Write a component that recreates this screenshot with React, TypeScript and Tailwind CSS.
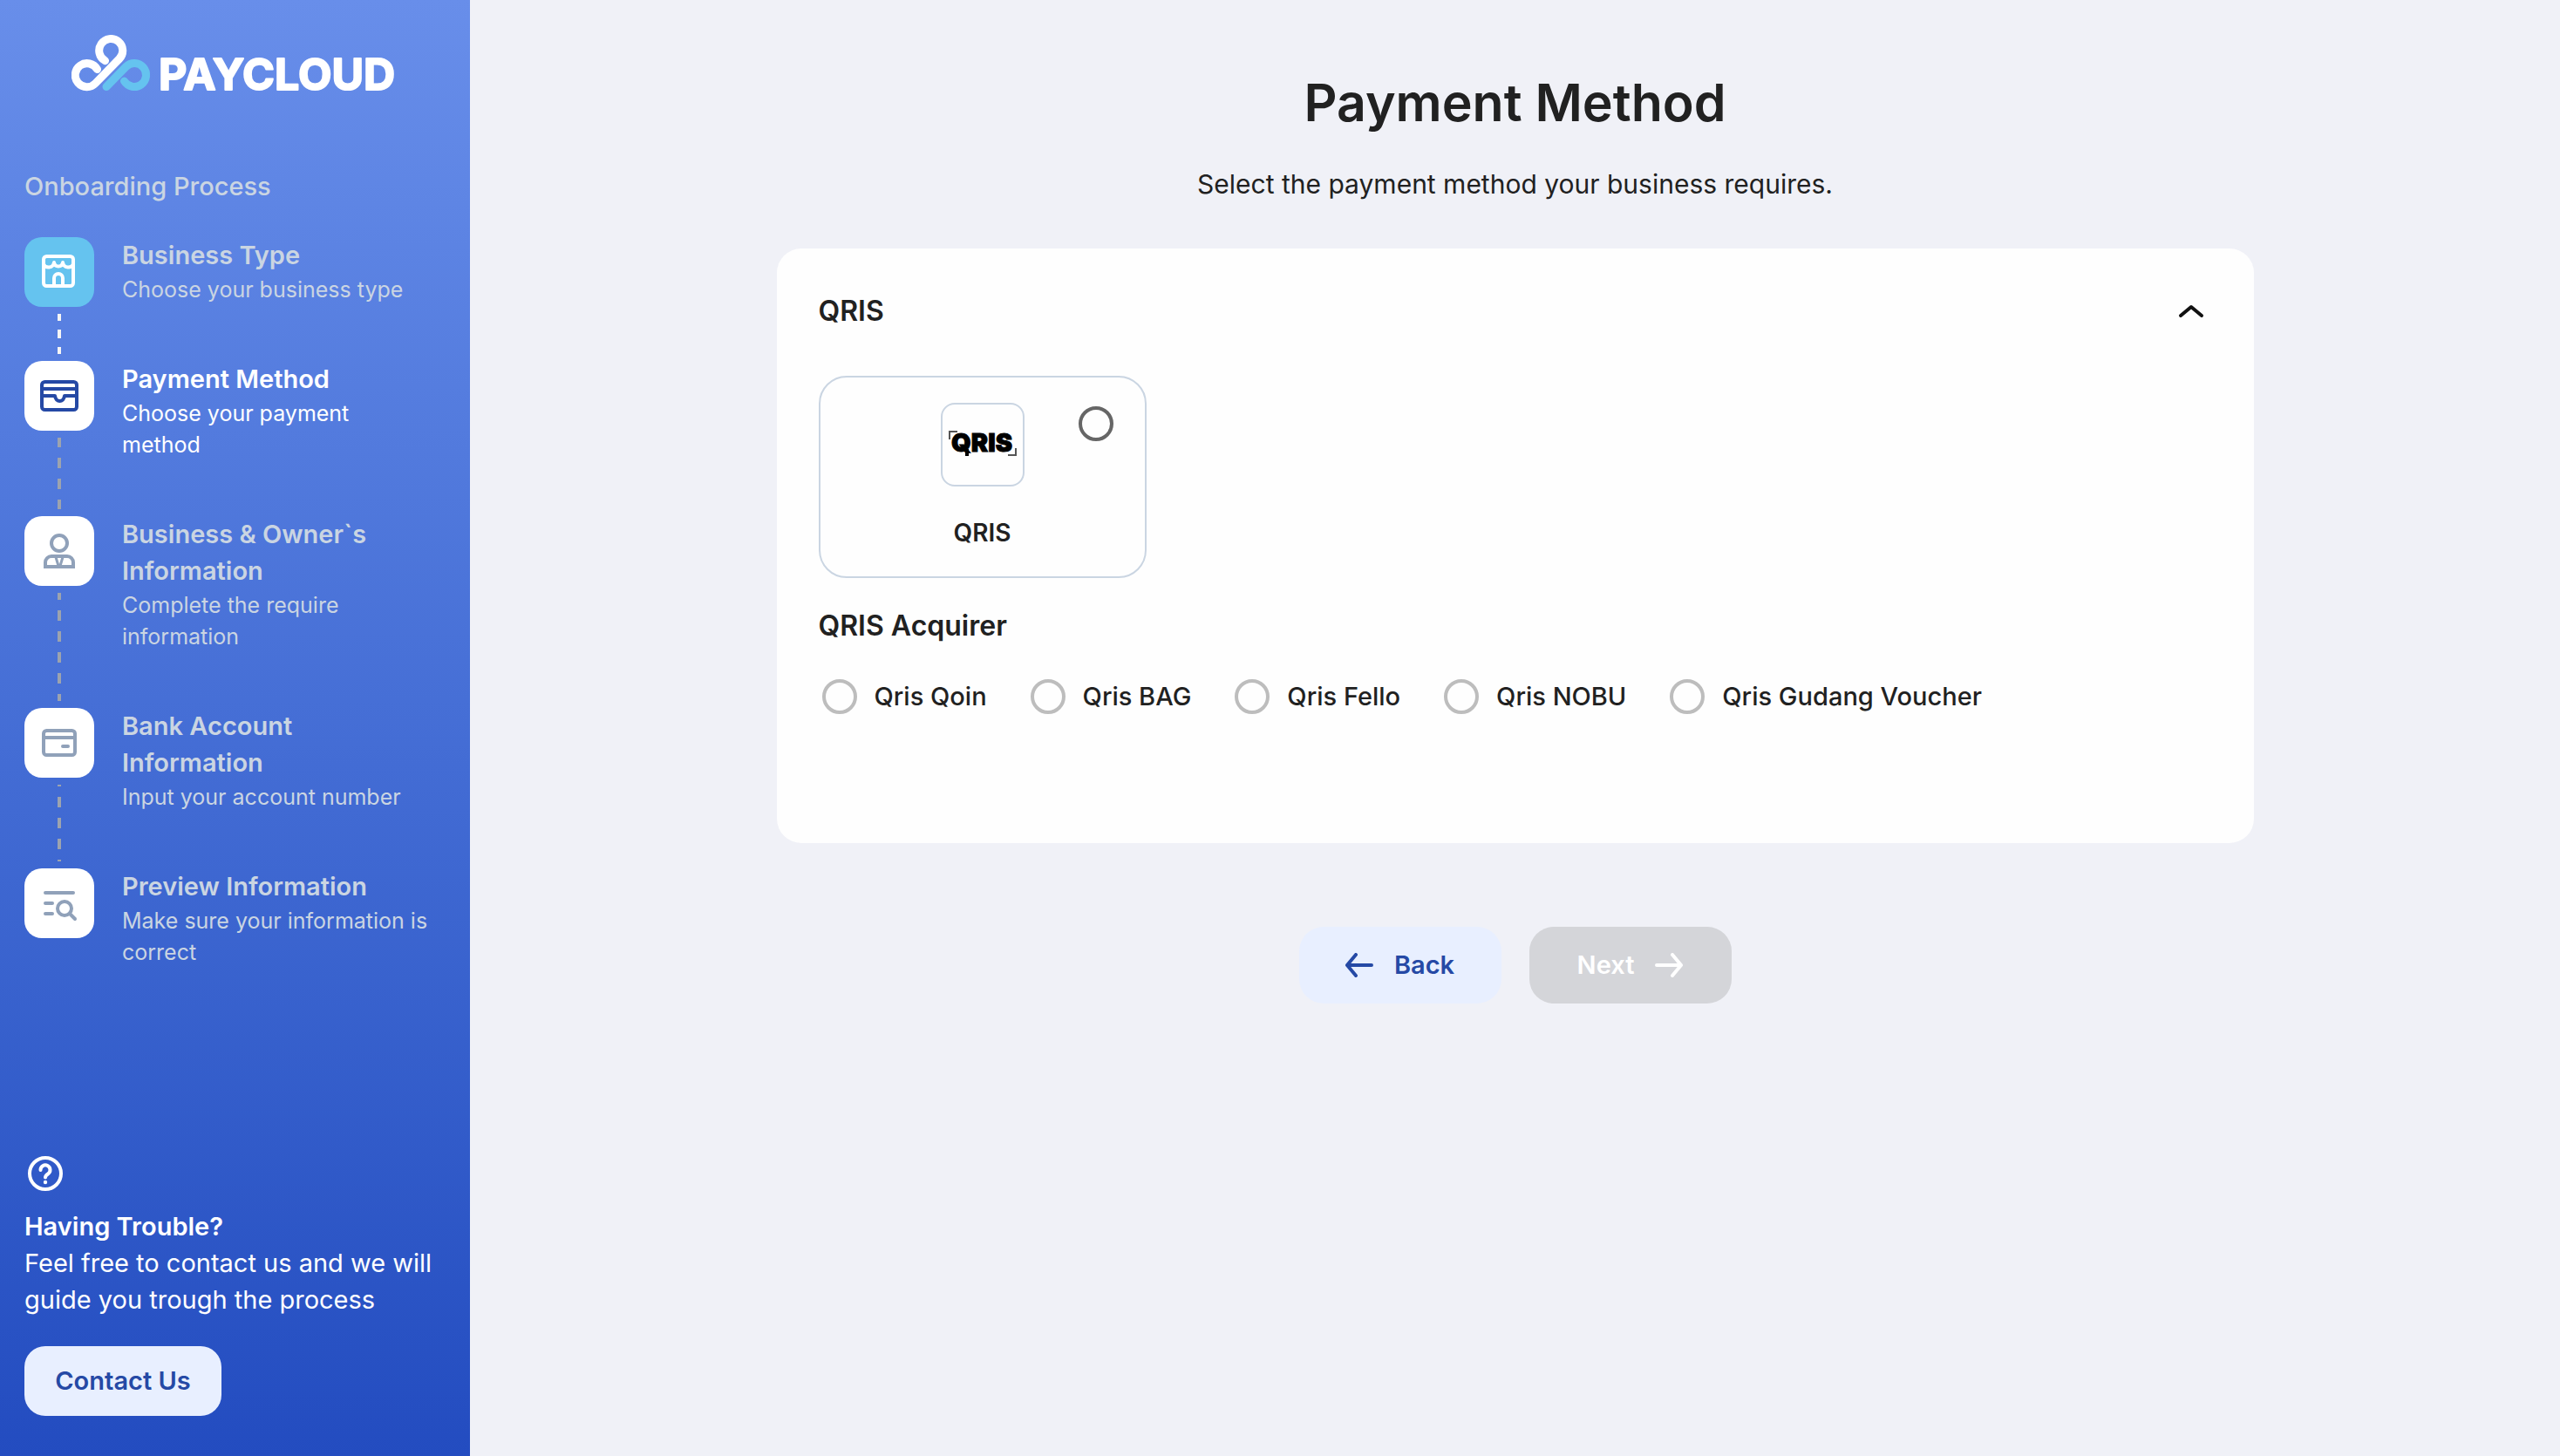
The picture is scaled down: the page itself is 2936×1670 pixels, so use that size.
import React, { useState } from 'react';

type Status = 'done' | 'current' | 'todo';

const ShopIcon = () => (
  <svg viewBox="0 0 48 48" className="h-12 w-12" fill="none" stroke="currentColor" strokeWidth="4" strokeLinecap="round" strokeLinejoin="round" aria-hidden="true">
    <rect x="6" y="6" width="34" height="34" rx="3.5" />
    <path d="M6 15c2 5 11 5 12-2 1 6 9 6 10 0 1 7 10 7 12 2" />
    <path d="M18 40v-9a5 5 0 0 1 10 0v9" />
  </svg>
);

const WalletIcon = () => (
  <svg viewBox="0 0 48 48" className="h-12 w-12" fill="none" stroke="currentColor" strokeWidth="4" strokeLinejoin="round" aria-hidden="true">
    <rect x="4" y="8" width="40" height="32" rx="3.5" />
    <path d="M4 16h40" />
    <path d="M4 24h15c1 8 10 8 11 0h14" />
  </svg>
);

const OwnerIcon = () => (
  <svg viewBox="0 0 48 48" className="h-12 w-12" fill="none" stroke="currentColor" strokeWidth="4" aria-hidden="true">
    <circle cx="24" cy="15" r="9" />
    <path d="M8 42v-5a7 7 0 0 1 7-7h18a7 7 0 0 1 7 7v5z" />
    <path d="M20 31l3 10M28 31l-3 10" strokeWidth="3" />
  </svg>
);

const BankIcon = () => (
  <svg viewBox="0 0 48 48" className="h-12 w-12" fill="none" stroke="currentColor" strokeWidth="4" strokeLinecap="round" strokeLinejoin="round" aria-hidden="true">
    <rect x="6" y="10" width="36" height="28" rx="3.5" />
    <path d="M6 18h36M28 28h6" />
  </svg>
);

const PreviewIcon = () => (
  <svg viewBox="0 0 48 48" className="h-12 w-12" fill="none" stroke="currentColor" strokeWidth="4" strokeLinecap="round" aria-hidden="true">
    <path d="M8 12h32M8 24h8M8 36h8" />
    <circle cx="30" cy="30" r="8" />
    <path d="M36 36l6 6" />
  </svg>
);

const ArrowIcon = ({ className }: { className?: string }) => (
  <svg viewBox="0 0 32 28" className={`h-7 w-8 ${className ?? ''}`} fill="none" stroke="currentColor" strokeWidth="4" strokeLinecap="round" strokeLinejoin="round" aria-hidden="true">
    <path d="M12 2L2 14l10 12M2 14h28" />
  </svg>
);

const Logo = () => (
  <svg viewBox="0 0 376 80" className="h-20 w-[376px]" role="img" aria-label="Paycloud">
    <g fill="none" strokeWidth="9" strokeLinecap="round" strokeLinejoin="round">
      <path stroke="#65c3ef" d="M40 59.5L62.5 36.5A13.5 13.5 0 1 1 60.5 53" />
      <path stroke="#fff" d="M29.5 39.5A13.5 13.5 0 1 0 27.5 55.5L54.8 27.5A13.5 13.5 0 1 0 38.5 29.7" />
    </g>
    <text x="100" y="63" fill="#fff" stroke="#fff" strokeWidth="2" strokeLinejoin="round" className="font-['Inter',sans-serif] text-[50px] font-bold">
      PAYCLOUD
    </text>
  </svg>
);

const QrisMark = () => (
  <svg viewBox="0 0 84 48" className="h-12 w-[84px]" aria-hidden="true">
    <path d="M4 18v-9h9M71 36h9v-8" fill="none" stroke="#555" strokeWidth="2" />
    <path d="M22 29h4v8h-4z" />
    <text x="6" y="32" fill="#000" stroke="#000" className="font-['Inter',sans-serif] text-[29px] font-black">
      QRIS
    </text>
  </svg>
);

const steps: { title: string; text: string; status: Status; icon: React.ReactNode; line?: string }[] = [
  {
    title: 'Business Type',
    text: 'Choose your business type',
    status: 'done',
    icon: <ShopIcon />,
    line: 'bg-[length:4px_20px] bg-[linear-gradient(transparent_5px,#f5f5f5_5px,#f5f5f5_15px,transparent_15px)] bg-[position:center_-7px]',
  },
  {
    title: 'Payment Method',
    text: 'Choose your payment method',
    status: 'current',
    icon: <WalletIcon />,
    line: 'bg-[length:4px_24px] bg-[linear-gradient(transparent_6px,#9ca3af_6px,#9ca3af_18px,transparent_18px)] bg-[position:center_-7px]',
  },
  {
    title: 'Business & Owner`s Information',
    text: 'Complete the require information',
    status: 'todo',
    icon: <OwnerIcon />,
    line: 'bg-[length:4px_24px] bg-[linear-gradient(transparent_6px,#9ca3af_6px,#9ca3af_18px,transparent_18px)] bg-[position:center_-10px]',
  },
  {
    title: 'Bank Account Information',
    text: 'Input your account number',
    status: 'todo',
    icon: <BankIcon />,
    line: 'bg-[length:4px_24px] bg-[linear-gradient(transparent_6px,#9ca3af_6px,#9ca3af_18px,transparent_18px)] bg-[position:center_-16px]',
  },
  {
    title: 'Preview Information',
    text: 'Make sure your information is correct',
    status: 'todo',
    icon: <PreviewIcon />,
  },
];

const tileStyles: Record<Status, string> = {
  done: 'bg-[#65c3ef] text-white',
  current: 'bg-white text-[#2549a5]',
  todo: 'bg-white text-slate-400',
};

const acquirers = ['Qris Qoin', 'Qris BAG', 'Qris Fello', 'Qris NOBU', 'Qris Gudang Voucher'];

const Sidebar = () => (
  <aside className="flex w-[539px] shrink-0 flex-col bg-linear-to-b from-[#688eea] to-[#234cc0] px-7 pt-10 pb-[46px]">
    <div className="mb-[73px] flex justify-center">
      <Logo />
    </div>
    <p className="mb-[37px] text-[29px] leading-[42px] font-medium text-slate-300">Onboarding Process</p>

    <ol>
      {steps.map((step) => (
        <li key={step.title} className="flex gap-8" aria-current={step.status === 'current' ? 'step' : undefined}>
          <div className="flex flex-col items-center">
            <div className={`flex h-20 w-20 items-center justify-center rounded-[20px] ${tileStyles[step.status]}`}>
              {step.icon}
            </div>
            {step.line && <div className={`my-2 w-1 flex-1 bg-repeat-y ${step.line}`} />}
          </div>
          <div className={`flex-1 pr-[18px] pb-16 ${step.status === 'current' ? 'text-white' : 'text-slate-300'}`}>
            <h2 className="text-[29px] leading-[42px] font-semibold">{step.title}</h2>
            <p className="text-[25px] leading-9">{step.text}</p>
          </div>
        </li>
      ))}
    </ol>

    <div className="mt-auto text-white">
      <svg viewBox="0 0 48 48" className="mb-4 h-12 w-12" fill="none" stroke="currentColor" strokeWidth="4" strokeLinecap="round" strokeLinejoin="round" aria-hidden="true">
        <circle cx="24" cy="24" r="18" />
        <path d="M18.5 20a5.5 5.5 0 1 1 8.5 4.5c-2 1.3-3 2-3 4" />
        <circle cx="24" cy="34" r="2.2" fill="currentColor" stroke="none" />
      </svg>
      <h2 className="text-[29px] leading-[42px] font-semibold">Having Trouble?</h2>
      <p className="text-[29px] leading-[42px]">Feel free to contact us and we will guide you trough the process</p>
      <button type="button" className="mt-8 h-20 w-[226px] rounded-3xl bg-[#e8efff] text-[29px] font-semibold text-[#2549a5]">
        Contact Us
      </button>
    </div>
  </aside>
);

const App = () => {
  const [open, setOpen] = useState(true);

  return (
    <div className="flex min-h-screen bg-[#f0f1f7] font-['Inter',sans-serif] text-[#212121]">
      <Sidebar />

      <main className="flex flex-1 flex-col items-center px-12 pt-[76px]">
        <h1 className="text-[59px] leading-[84px] font-semibold">Payment Method</h1>
        <p className="mt-[30px] text-[30px] leading-[42px]">Select the payment method your business requires.</p>

        <section className="mt-[53px] w-full max-w-[1694px] rounded-[28px] bg-[#fefefe] px-12 pt-12 pb-[147px]">
          <button
            type="button"
            aria-expanded={open}
            onClick={() => setOpen(!open)}
            className="flex w-full items-center justify-between text-[32px] leading-[48px] font-semibold"
          >
            QRIS
            <svg viewBox="0 0 48 48" className="h-12 w-12" fill="none" stroke="#111" strokeWidth="4" strokeLinecap="round" strokeLinejoin="round" aria-hidden="true">
              <path d="M12 29l12-10 12 10" />
            </svg>
          </button>

          {open && (
            <div className="pt-[50px]">
              <label className="relative flex h-[232px] w-[376px] flex-col items-center rounded-[32px] border-2 border-slate-300 pt-[29px]">
                <span className="flex h-24 w-24 items-center justify-center rounded-2xl border-2 border-slate-300">
                  <QrisMark />
                </span>
                <span className="mt-8 text-[28px] leading-[42px] font-semibold">QRIS</span>
                <input
                  type="radio"
                  name="method"
                  className="absolute top-[33px] right-9 h-10 w-10 appearance-none rounded-full border-4 border-[#666] checked:border-[12px] checked:border-[#2549a5]"
                />
              </label>

              <h2 className="mt-[31px] text-[32px] leading-[48px] font-semibold">QRIS Acquirer</h2>
              <div className="mt-9 flex flex-wrap gap-x-[50px] gap-y-6 pl-1">
                {acquirers.map((name) => (
                  <label key={name} className="flex items-center gap-5 text-[29px] leading-[42px] font-medium">
                    <input
                      type="radio"
                      name="acquirer"
                      disabled
                      className="h-10 w-10 appearance-none rounded-full border-4 border-[#bdbdbd]"
                    />
                    {name}
                  </label>
                ))}
              </div>
            </div>
          )}
        </section>

        <div className="mt-24 flex gap-8">
          <button type="button" className="flex h-[88px] w-[232px] items-center justify-center gap-6 rounded-[28px] bg-[#e8efff] text-[29px] font-semibold text-[#2549a5]">
            <ArrowIcon />
            Back
          </button>
          <button type="button" disabled className="flex h-[88px] w-[232px] items-center justify-center gap-6 rounded-[28px] bg-[#d4d5d9] text-[29px] font-semibold text-white">
            Next
            <ArrowIcon className="rotate-180" />
          </button>
        </div>
      </main>
    </div>
  );
};

export default App;
